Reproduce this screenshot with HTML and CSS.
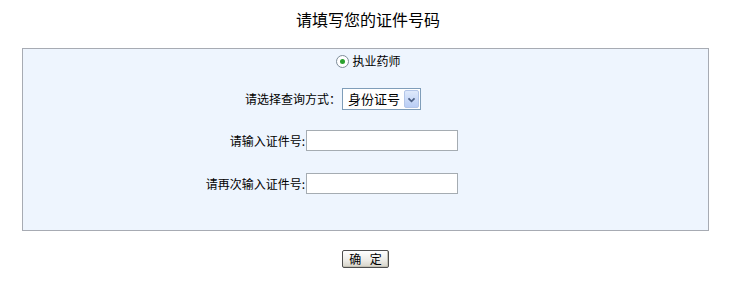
FILE: index.html
```html
<!DOCTYPE html>
<html lang="zh">
<head>
<meta charset="utf-8">
<title>请填写您的证件号码</title>
<link rel="stylesheet" href="styles.css">
</head>
<body>
<h1 class="title">请填写您的证件号码</h1>
<div class="panel">
  <div class="row row-radio">
    <span class="radio"><span class="dot"></span></span>
    <span class="radio-label">执业药师</span>
  </div>
  <div class="row row-select">
    <span class="label label-wide">请选择查询方式：</span>
    <span class="select">
      <span class="select-text">身份证号</span>
      <span class="select-btn">
        <svg width="15" height="18" viewBox="0 0 15 18"><path d="M4 7 L7.5 10.5 L11 7" fill="none" stroke="#4d6185" stroke-width="2"/></svg>
      </span>
    </span>
  </div>
  <div class="row row-input1">
    <span class="label">请输入证件号:</span>
    <input class="text" type="text">
  </div>
  <div class="row row-input2">
    <span class="label">请再次输入证件号:</span>
    <input class="text" type="text">
  </div>
</div>
<div class="actions">
  <button class="btn" type="button">确 定</button>
</div>
</body>
</html>
```

FILE: styles.css
```css
html, body {
  margin: 0;
  padding: 0;
  background: #ffffff;
}
body {
  font-family: "Noto Sans CJK SC", "DejaVu Sans", sans-serif;
  font-size: 12px;
  color: #000;
}
.title {
  margin: 0;
  height: 38px;
  line-height: 38px;
  font-size: 16px;
  font-weight: normal;
  text-align: center;
  padding-left: 3px;
}
.panel {
  margin-top: 10px;
  margin-left: 22px;
  width: 685px;
  border: 1px solid #a7abb3;
  background: #eef5fe;
  padding-bottom: 36px;
}
.row {
  display: flex;
  align-items: center;
}
.row-radio {
  justify-content: center;
  padding-top: 3px;
  height: 18px;
  padding-left: 6px;
}
.radio {
  width: 11px;
  height: 11px;
  border: 1px solid #7d8c99;
  border-radius: 50%;
  background: #fff;
  display: flex;
  align-items: center;
  justify-content: center;
  margin-right: 3px;
}
.dot {
  width: 5px;
  height: 5px;
  border-radius: 50%;
  background: #2aa12e;
}
.radio-label {
  line-height: 18px;
}
.label {
  width: 282px;
  text-align: right;
  line-height: 20px;
  flex: none;
}
.label-wide {
  width: 318px;
}
.row-select {
  margin-top: 18px;
  height: 22px;
}
.select {
  margin-left: 1px;
  width: 77px;
  height: 20px;
  border: 1px solid #7f9db9;
  background: #fff;
  display: flex;
  align-items: center;
  justify-content: space-between;
}
.select-text {
  font-size: 13px;
  padding-left: 5px;
  line-height: 20px;
}
.select-btn {
  width: 15px;
  height: 18px;
  margin-right: 1px;
  background: linear-gradient(#dfe9fb, #b9cdf5);
  border: 1px solid #b4c6e8;
  border-radius: 2px;
  box-sizing: border-box;
  display: flex;
}
.row-input1 {
  margin-top: 20px;
}
.row-input2 {
  margin-top: 22px;
}
.text {
  margin: 0 0 0 1px;
  width: 152px;
  height: 21px;
  box-sizing: border-box;
  border: 1px solid #a5acb2;
  background: #fff;
  padding: 0 2px;
  font: inherit;
}
.actions {
  text-align: center;
  margin-top: 19px;
  padding-right: 2px;
}
.btn {
  width: 47px;
  height: 18px;
  padding: 0;
  margin: 0;
  font-family: inherit;
  font-size: 12px;
  line-height: 14px;
  letter-spacing: 3px;
  text-indent: 3px;
  color: #000;
  border: 1px solid #4e4e4e;
  border-radius: 2px;
  background: linear-gradient(#ffffff, #ecebe6 60%, #d6d3c8);
  box-shadow: inset -1px -1px 0 #c4c1b4;
}
```
